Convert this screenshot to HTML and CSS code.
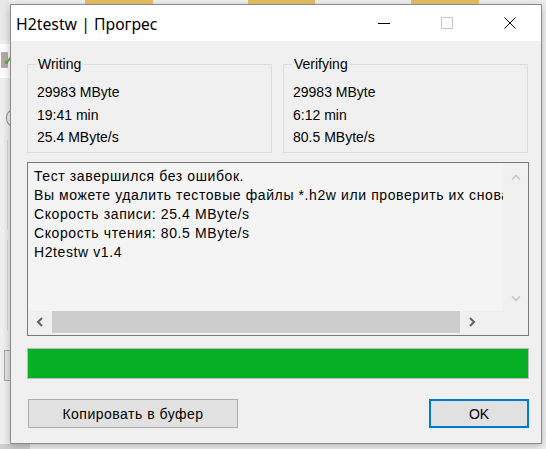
FILE: index.html
```html
<!DOCTYPE html>
<html lang="ru">
<head>
<meta charset="utf-8">
<title>H2testw | Прогресс</title>
<link rel="stylesheet" href="styles.css">
</head>
<body>
<div class="desktop">
  <div class="bg-folder f1"></div>
  <div class="bg-folder f2"></div>
  <div class="bg-folder f3"></div>
  <div class="bg-strip"></div>
  <div class="bg-usb"><span class="usb-body"></span><span class="usb-check">✓</span></div>
  <div class="bg-circle"></div>
  <div class="bg-line l1"></div>
  <div class="bg-line l2"></div>
  <div class="bg-box"></div>
  <div class="bg-bottom"></div>

  <div class="window">
    <div class="titlebar">
      <div class="title">H2testw | Прогрес</div>
      <div class="caption">
        <div class="cap-btn">
          <svg width="12" height="12" viewBox="0 0 12 12"><path d="M0 6.5H12" stroke="#000" stroke-width="1"/></svg>
        </div>
        <div class="cap-btn">
          <svg width="12" height="12" viewBox="0 0 12 12"><rect x="0.5" y="0.5" width="11" height="11" fill="none" stroke="#c8c8c8" stroke-width="1"/></svg>
        </div>
        <div class="cap-btn">
          <svg width="12" height="12" viewBox="0 0 12 12"><path d="M0.5 0.5L11.5 11.5M11.5 0.5L0.5 11.5" stroke="#000" stroke-width="1"/></svg>
        </div>
      </div>
    </div>

    <div class="content">
      <div class="groups">
        <div class="group">
          <span class="legend">Writing</span>
          <div class="line">29983 MByte</div>
          <div class="line">19:41 min</div>
          <div class="line">25.4 MByte/s</div>
        </div>
        <div class="group">
          <span class="legend">Verifying</span>
          <div class="line">29983 MByte</div>
          <div class="line">6:12 min</div>
          <div class="line">80.5 MByte/s</div>
        </div>
      </div>

      <div class="log">
        <div class="log-main">
          <div class="log-text">
            <div class="log-line">Тест завершился без ошибок.</div>
            <div class="log-line">Вы можете удалить тестовые файлы *.h2w или проверить их снова.</div>
            <div class="log-line">Скорость записи: 25.4 MByte/s</div>
            <div class="log-line">Скорость чтения: 80.5 MByte/s</div>
            <div class="log-line">H2testw v1.4</div>
          </div>
          <div class="hscroll">
            <div class="harrow">
              <svg width="8" height="10" viewBox="0 0 8 10"><path d="M6 1L2 5L6 9" fill="none" stroke="#606060" stroke-width="2"/></svg>
            </div>
            <div class="hthumb"></div>
            <div class="harrow">
              <svg width="8" height="10" viewBox="0 0 8 10"><path d="M2 1L6 5L2 9" fill="none" stroke="#606060" stroke-width="2"/></svg>
            </div>
          </div>
        </div>
        <div class="vscroll">
          <svg width="10" height="6" viewBox="0 0 10 6"><path d="M1 5.5L5 1.5L9 5.5" fill="none" stroke="#c4c4c4" stroke-width="1.5"/></svg>
          <svg width="10" height="6" viewBox="0 0 10 6"><path d="M1 0.5L5 4.5L9 0.5" fill="none" stroke="#c4c4c4" stroke-width="1.5"/></svg>
        </div>
      </div>

      <div class="progress"><div class="progress-fill"></div></div>

      <div class="buttons">
        <button class="btn btn-copy">Копировать в буфер</button>
        <button class="btn btn-ok">OK</button>
      </div>
    </div>
  </div>
</div>
</body>
</html>
```

FILE: styles.css
```css
html, body {
  margin: 0;
  padding: 0;
}
body {
  width: 546px;
  height: 449px;
  overflow: hidden;
  background: #f0f0f0;
  font-family: "Liberation Sans", Arial, sans-serif;
}
.desktop {
  position: relative;
  width: 546px;
  height: 449px;
  padding: 4px 0 0 10px;
  box-sizing: border-box;
  background: #f0f0f0;
}
/* background bits from the window behind */
.bg-folder {
  position: absolute;
  top: 0;
  height: 5px;
  background: linear-gradient(#e2bc5c, #eac96e);
}
.f1 { left: 85px; width: 68px; }
.f2 { left: 248px; width: 67px; }
.f3 { left: 411px; width: 68px; }
.bg-strip {
  position: absolute;
  left: 0; top: 0;
  width: 10px; height: 40px;
  background: #e9e9e9;
}
.bg-usb {
  position: absolute;
  left: 0; top: 44px;
  width: 10px; height: 34px;
  background: #fff;
}
.usb-body {
  position: absolute;
  left: 1px; top: 8px;
  width: 7px; height: 16px;
  background: #b9a6ad;
  border-radius: 1px;
}
.usb-check {
  position: absolute;
  left: 3px; top: 10px;
  font-size: 13px;
  line-height: 13px;
  font-weight: bold;
  color: #4cae3a;
}
.bg-circle {
  position: absolute;
  left: 6px; top: 110px;
  width: 10px; height: 14px;
  border: 1px solid #909090;
  border-radius: 50%;
}
.bg-line {
  position: absolute;
  left: 7px;
  width: 1px;
  background: #dadada;
}
.l1 { top: 140px; height: 90px; }
.l2 { top: 240px; height: 90px; }
.bg-box {
  position: absolute;
  left: 4px; top: 350px;
  width: 8px; height: 29px;
  border: 1px solid #a8a8a8;
  background: #e6e6e6;
}
.bg-bottom {
  position: absolute;
  left: 0; top: 444px;
  width: 30px; height: 5px;
  background: #cfcfcf;
}

/* window */
.window {
  position: relative;
  width: 532px;
  height: 440px;
  box-sizing: border-box;
  border: 1px solid #8c8c8c;
  background: #f0f0f0;
  box-shadow: 0 2px 8px rgba(0,0,0,0.25);
  display: flex;
  flex-direction: column;
}
.titlebar {
  height: 36px;
  background: #fff;
  display: flex;
  align-items: center;
  flex: none;
}
.title {
  padding-left: 5px;
  padding-top: 1px;
  font-family: "Noto Sans", "Open Sans", sans-serif;
  font-size: 15.8px;
  color: #000;
  flex: 1;
}
.caption {
  display: flex;
  height: 36px;
}
.cap-btn {
  width: 63px;
  height: 36px;
  display: flex;
  align-items: center;
  justify-content: center;
}
.cap-btn svg { display: block; }

.content {
  flex: 1;
  padding: 23px 12px 0 16px;
  display: flex;
  flex-direction: column;
}
.groups {
  display: grid;
  grid-template-columns: 245px 245px;
  column-gap: 11px;
  height: 89px;
}
.group {
  position: relative;
  border: 1px solid #dcdcdc;
  padding: 16px 0 0 9px;
  font-size: 14px;
  color: #000;
}
.legend {
  position: absolute;
  left: 8px;
  top: -9px;
  padding: 0 2px;
  line-height: 16px;
  background: #f0f0f0;
  font-size: 14px;
}
.line {
  line-height: 22.5px;
}

.log {
  margin-top: 9px;
  height: 174px;
  box-sizing: border-box;
  border: 1px solid #7a7a7a;
  display: flex;
  background: #f0f0f0;
}
.log-main {
  flex: 1;
  display: flex;
  flex-direction: column;
  min-width: 0;
}
.log-text {
  flex: 1;
  background: #f4f4f4;
  padding: 4px 0 0 6px;
  overflow: hidden;
  font-size: 14px;
  letter-spacing: 0.6px;
  color: #000;
}
.log-line {
  line-height: 19px;
  white-space: nowrap;
}
.hscroll {
  height: 22px;
  display: flex;
  align-items: stretch;
  background: #f0f0f0;
  flex: none;
  margin-bottom: 2px;
}
.harrow {
  width: 24px;
  display: flex;
  align-items: center;
  justify-content: center;
}
.hthumb {
  width: 408px;
  background: #cdcdcd;
}
.vscroll {
  width: 25px;
  display: flex;
  flex-direction: column;
  justify-content: space-between;
  align-items: center;
  padding: 11px 0 33px;
}
.vscroll svg { display: block; }

.progress {
  margin-top: 12px;
  height: 31px;
  box-sizing: border-box;
  border: 1px solid #bcbcbc;
  background: #e6e6e6;
}
.progress-fill {
  width: 100%;
  height: 100%;
  background: #06b025;
}

.buttons {
  margin-top: 20px;
  display: flex;
  justify-content: space-between;
}
.btn {
  height: 29px;
  box-sizing: border-box;
  background: #e1e1e1;
  border: 1px solid #adadad;
  font-family: "Liberation Sans", Arial, sans-serif;
  font-size: 14px;
  letter-spacing: 0.5px;
  color: #000;
  padding: 0;
  margin: 0;
}
.btn-copy { width: 210px; margin-left: 1px; }
.btn-ok {
  width: 100px;
  border: 2px solid #0078d7;
  letter-spacing: 0;
}
```
